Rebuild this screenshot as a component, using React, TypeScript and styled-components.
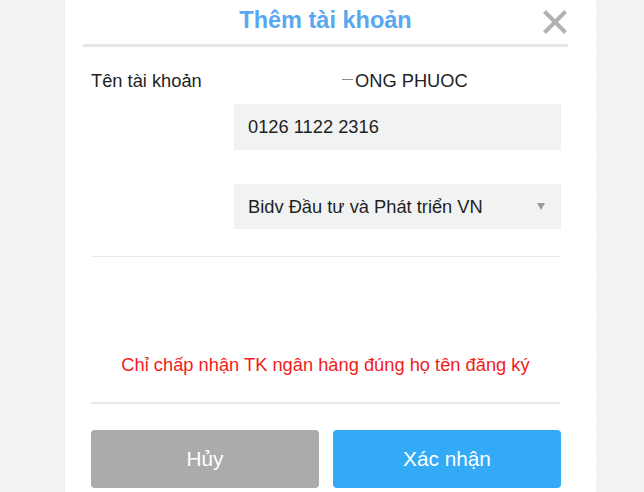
import React from "react";
import styled, { createGlobalStyle } from "styled-components";

const GlobalStyle = createGlobalStyle`
  html, body { margin: 0; padding: 0; }
  body {
    background: #f1f2f4;
    font-family: "Liberation Sans", Arial, Helvetica, sans-serif;
  }
`;

const Page = styled.div`
  display: flex;
  height: 492px;
  padding-left: 65px;
  overflow: hidden;
`;

const Card = styled.div`
  width: 532px;
  background: #ffffff;
  border-right: 1px dashed #eceef0;
  box-sizing: border-box;
  display: flex;
  flex-direction: column;
`;

const Header = styled.div`
  position: relative;
  margin: 0 28px 0 18px;
  height: 44px;
  border-bottom: 3px solid #e6e6e6;
  display: flex;
  align-items: center;
  justify-content: center;
`;

const Title = styled.h1`
  margin: 0;
  margin-top: -3px;
  font-size: 23.5px;
  font-weight: 700;
  color: #58a8ef;
`;

const CloseButton = styled.button`
  position: absolute;
  right: 0;
  top: 9px;
  width: 26px;
  height: 26px;
  padding: 0;
  border: 0;
  background: transparent;
  display: flex;
  cursor: pointer;
`;

const Body = styled.div`
  padding: 0 36px 0 26px;
  display: flex;
  flex-direction: column;
`;

const FormRow = styled.div<{ $top: number }>`
  display: grid;
  grid-template-columns: 143px 327px;
  margin-top: ${(p) => p.$top}px;
  align-items: center;
`;

const Label = styled.div`
  font-size: 18.3px;
  line-height: 20px;
  color: #1f1f1f;
`;

const StaticValue = styled.div`
  display: flex;
  align-items: center;
  padding-left: 108px;
  font-size: 18.3px;
  line-height: 20px;
  color: #1f1f1f;
`;

const Redaction = styled.span`
  width: 11px;
  height: 1px;
  margin-right: 2px;
  margin-top: -3px;
  background: #8a8a8a;
`;

const Field = styled.div<{ $h: number }>`
  grid-column: 2;
  height: ${(p) => p.$h}px;
  background: #f1f2f2;
  display: flex;
  align-items: center;
  justify-content: space-between;
  padding: 0 16px 0 14px;
  box-sizing: border-box;
  font-size: 18.3px;
  color: #1f1f1f;
`;

const Caret = styled.span`
  width: 0;
  height: 0;
  border-left: 4px solid transparent;
  border-right: 4px solid transparent;
  border-top: 7px solid #9b9b9b;
`;

const Divider = styled.div<{ $top: number; $w: number }>`
  margin-top: ${(p) => p.$top}px;
  height: ${(p) => p.$w}px;
  background: #e9e9e9;
`;

const Notice = styled.p`
  margin: 0;
  margin-top: 98px;
  text-align: center;
  font-size: 18.3px;
  line-height: 20px;
  color: #f21b1b;
`;

const Actions = styled.div`
  display: grid;
  grid-template-columns: 228px 228px;
  column-gap: 14px;
  margin-top: 26px;
`;

const ActionButton = styled.button<{ $primary?: boolean }>`
  height: 58px;
  border: 0;
  border-radius: 4px;
  background: ${(p) => (p.$primary ? "#33aaf6" : "#ababab")};
  color: #ffffff;
  font-family: "Liberation Sans", Arial, sans-serif;
  font-size: 20.8px;
  cursor: pointer;
`;

export default function App() {
  return (
    <>
      <GlobalStyle />
      <Page>
        <Card>
          <Header>
            <Title>Thêm tài khoản</Title>
            <CloseButton aria-label="Đóng">
              <svg width="26" height="26" viewBox="0 0 26 26">
                <path
                  d="M2.5 2.5 L23.5 23.5 M23.5 2.5 L2.5 23.5"
                  stroke="#b2b2b2"
                  strokeWidth="4"
                  fill="none"
                />
              </svg>
            </CloseButton>
          </Header>
          <Body>
            <FormRow $top={24}>
              <Label>Tên tài khoản</Label>
              <StaticValue>
                <Redaction />
                ONG PHUOC
              </StaticValue>
            </FormRow>
            <FormRow $top={13}>
              <Field $h={46}>0126 1122 2316</Field>
            </FormRow>
            <FormRow $top={34}>
              <Field $h={45}>
                Bidv Đầu tư và Phát triển VN
                <Caret />
              </Field>
            </FormRow>
            <Divider $top={27} $w={1} />
            <Notice>Chỉ chấp nhận TK ngân hàng đúng họ tên đăng ký</Notice>
            <Divider $top={27} $w={2} />
            <Actions>
              <ActionButton>Hủy</ActionButton>
              <ActionButton $primary>Xác nhận</ActionButton>
            </Actions>
          </Body>
        </Card>
      </Page>
    </>
  );
}
